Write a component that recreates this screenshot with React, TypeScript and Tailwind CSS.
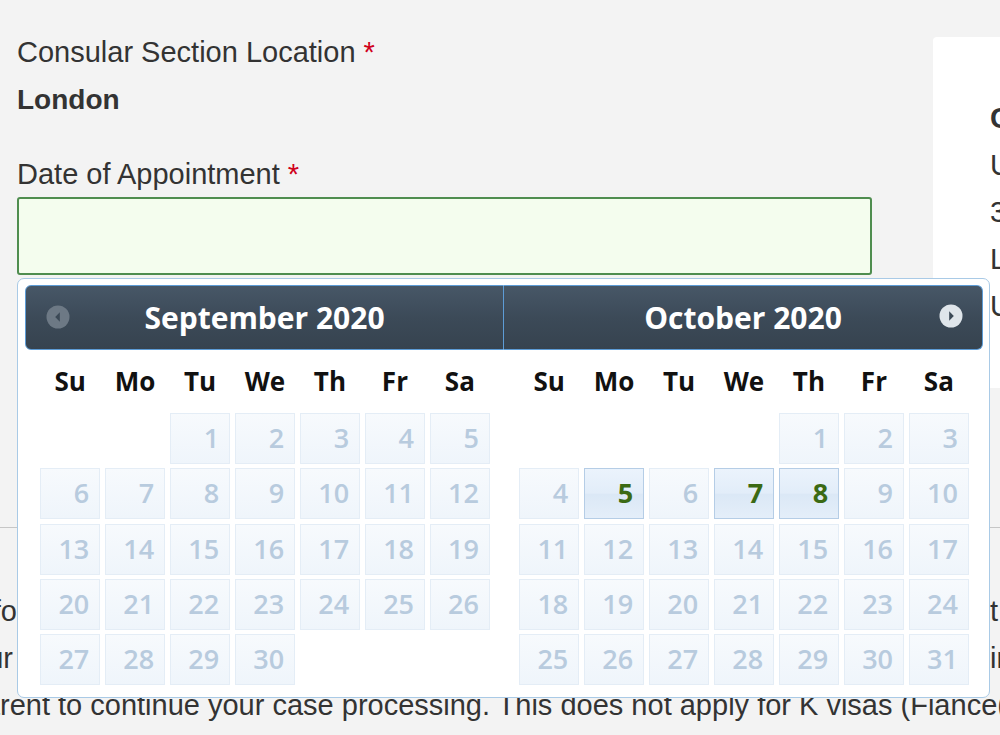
import React from "react";
import clsx from "clsx";

const DAYS = ["Su", "Mo", "Tu", "We", "Th", "Fr", "Sa"];

function PrevIcon() {
  return (
    <svg className="absolute left-[20px] top-[19px]" width="24" height="24" viewBox="0 0 24 24">
      <circle cx="12" cy="12" r="11.5" fill="#6d7985" />
      <path d="M13.8 7.2 L13.8 16.8 L9.2 12 Z" fill="#3b4956" />
    </svg>
  );
}

function NextIcon() {
  return (
    <svg className="absolute right-[19px] top-[18px]" width="24" height="24" viewBox="0 0 24 24">
      <circle cx="12" cy="12" r="11.5" fill="#dfe5ea" />
      <path d="M10.2 7.2 L10.2 16.8 L14.8 12 Z" fill="#3b4956" />
    </svg>
  );
}

function Month({
  title,
  offset,
  count,
  active,
  side,
}: {
  title: string;
  offset: number;
  count: number;
  active: number[];
  side: "left" | "right";
}) {
  const cells: (number | null)[] = [];
  for (let i = 0; i < offset; i++) cells.push(null);
  for (let d = 1; d <= count; d++) cells.push(d);
  while (cells.length < 35) cells.push(null);

  return (
    <div className="w-[479px] shrink-0 flex flex-col">
      <div
        className={clsx(
          "relative h-[65px] flex items-center justify-center border border-[#5d9cd6] bg-gradient-to-b from-[#475767] via-[#3c4a58] to-[#36434f]",
          side === "left" ? "rounded-l-[6px]" : "rounded-r-[6px] border-l-0"
        )}
      >
        {side === "left" ? <PrevIcon /> : <NextIcon />}
        <span className="font-['Open_Sans',sans-serif] font-bold text-[30px] leading-none text-white">
          {title}
        </span>
      </div>
      <div className="pl-[15px]">
        <div className="w-[450px] h-[62px] grid grid-cols-7 gap-x-[4.7px] items-center">
          {DAYS.map((d) => (
            <div
              key={d}
              className="text-center font-['Open_Sans',sans-serif] font-bold text-[26px] leading-none text-[#111]"
            >
              {d}
            </div>
          ))}
        </div>
        <div className="mt-[1px] w-[450px] grid grid-cols-7 gap-x-[4.7px] gap-y-[4.25px]">
          {cells.map((d, i) => {
            if (d === null) return <div key={i} className="h-[51px]" />;
            const on = active.includes(d);
            return (
              <div
                key={i}
                className={clsx(
                  "h-[51px] flex items-center justify-end pr-[10px] pb-[2px] border font-['Open_Sans',sans-serif] text-[27px] leading-none",
                  on
                    ? "border-[#b5cde6] bg-[linear-gradient(to_bottom,#ebf3fc,#e2edf9_49%,#dbe8f6_52%,#e4eef9)] text-[#3b6a14] font-bold"
                    : "border-[#e4edf6] bg-gradient-to-b from-[#f7fafd] to-[#eff5fb] text-[#b8cbde] font-semibold"
                )}
              >
                {d}
              </div>
            );
          })}
        </div>
      </div>
    </div>
  );
}

function DatePicker() {
  return (
    <div className="absolute z-10 left-0 top-full mt-[3px] w-[973px] bg-white border border-[#a9cae6] rounded-[7px] pl-[7px] pr-[6px] pt-[6px] pb-[12px] flex">
      <Month title="September 2020" offset={2} count={30} active={[]} side="left" />
      <Month title="October 2020" offset={4} count={31} active={[5, 7, 8]} side="right" />
    </div>
  );
}

export default function App() {
  return (
    <div className="w-full h-screen overflow-hidden bg-[#f3f3f3] font-['Liberation_Sans',Arial,sans-serif] text-[#333]">
      <div className="flex h-[527px]">
        <div className="w-[933px] shrink-0 pl-[17px] pt-[32px]">
          <div className="text-[29px] leading-[40px] whitespace-nowrap">
            Consular Section Location <span className="text-[#d0021b]">*</span>
          </div>
          <div className="mt-[8px] text-[28px] leading-[40px] font-bold">London</div>
          <div className="mt-[34px] text-[29px] leading-[40px] whitespace-nowrap">
            Date of Appointment <span className="text-[#d0021b]">*</span>
          </div>
          <div className="relative mt-[3px] w-[855px]">
            <div className="h-[78px] rounded-[3px] border-2 border-[#4f8d4f] bg-[#f4fdee]" />
            <DatePicker />
          </div>
        </div>
        <div className="w-[400px] shrink-0 mt-[37px] h-[351px] bg-white rounded-[4px] pl-[57px] pt-[57.5px] text-[29px] leading-[47px] whitespace-nowrap">
          <div className="font-bold">Contact Information</div>
          <div>U.S. Embassy London</div>
          <div>33 Nine Elms Lane</div>
          <div>London SW11 7US</div>
          <div>United Kingdom</div>
        </div>
      </div>
      <div className="border-t border-[#c6c6c6]" />
      <div className="pt-[60px] text-[29px] leading-[47px] whitespace-nowrap">
        <div className="flex">
          <span className="w-[17px] shrink-0 flex justify-end">
            <span>Applicants must bring all required documents and information fo</span>
          </span>
          <span className="w-[973px] shrink-0 overflow-hidden">
            r the appointment, including evidence of the parents' physical presence in the United States a
          </span>
          <span>t the time of the child's birth.</span>
        </div>
        <div className="flex">
          <span className="w-[13px] shrink-0 flex justify-end">
            <span>by the U.S. citizen parent. If your</span>
          </span>
          <span className="w-[977px] shrink-0 overflow-hidden">
            {"\u00a0spouse cannot attend, the U.S. citizen parent must be present\u00a0"}
          </span>
          <span>in person or submit a notarized statement from the U.S. citizen</span>
        </div>
        <div className="flex">
          <span className="w-0 shrink-0 flex justify-end">
            <span>pa</span>
          </span>
          <span>
            rent to continue your case processing. This does not apply for K visas (Fiance(e)) or other immigrant visas.
          </span>
        </div>
      </div>
    </div>
  );
}
